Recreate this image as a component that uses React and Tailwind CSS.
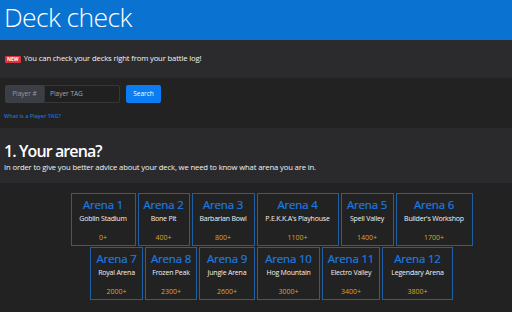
const ARENAS = [
  { n: 1, name: 'Goblin Stadium', trophies: '0+', w: 'w-[65px]' },
  { n: 2, name: 'Bone Pit', trophies: '400+', w: 'w-[52px]' },
  { n: 3, name: 'Barbarian Bowl', trophies: '800+', w: 'w-[63px]' },
  { n: 4, name: "P.E.K.K.A's Playhouse", trophies: '1100+', w: 'w-[82px]' },
  { n: 5, name: 'Spell Valley', trophies: '1400+', w: 'w-[53px]' },
  { n: 6, name: "Builder's Workshop", trophies: '1700+', w: 'w-[77px]' },
  { n: 7, name: 'Royal Arena', trophies: '2000+', w: 'w-[53px]' },
  { n: 8, name: 'Frozen Peak', trophies: '2300+', w: 'w-[52px]' },
  { n: 9, name: 'Jungle Arena', trophies: '2600+', w: 'w-[56px]' },
  { n: 10, name: 'Hog Mountain', trophies: '3000+', w: 'w-[63px]' },
  { n: 11, name: 'Electro Valley', trophies: '3400+', w: 'w-[58px]' },
  { n: 12, name: 'Legendary Arena', trophies: '3800+', w: 'w-[71px]' },
];

const ROWS = [ARENAS.slice(0, 6), ARENAS.slice(6)];

function ArenaCard({ a }) {
  return (
    <div className={`${a.w} h-[53px] border border-[#1f5fa6] flex flex-col items-center shrink-0`}>
      <div className="mt-[4px] text-[11.5px] leading-[14px] tracking-[-0.2px] text-[#1a7ce2] whitespace-nowrap [-webkit-text-stroke:0.2px_#1a7ce2]">Arena {a.n}</div>
      <div className="mt-[2px] text-[7px] leading-[10px] tracking-[-0.2px] text-[#f2f2f2] whitespace-nowrap">{a.name}</div>
      <div className="mt-auto mb-[2px] text-[7px] leading-[10px] text-[#d6a82c]">{a.trophies}</div>
    </div>
  );
}

export default function App() {
  return (
    <div className="w-[512px] h-[312px] overflow-hidden bg-[#222222] text-white" style={{ fontFamily: '"Open Sans", "Noto Sans", sans-serif' }}>
      <div className="h-[40px] bg-[#0a73d2] px-[4px] flex items-center">
        <h1 className="text-[26.5px] font-light leading-none tracking-[-0.6px] -mt-[6px]">Deck check</h1>
      </div>

      <div className="h-[38px] bg-[#2b2b2e] px-[5px] flex items-center gap-[3px]">
        <span className="bg-[#d9333f] text-white text-[5px] font-bold leading-[7px] px-[2px] rounded-[1px]">NEW</span>
        <span className="text-[7.7px] leading-none text-[#f4f4f4] tracking-[-0.15px]">You can check your decks right from your battle log!</span>
      </div>

      <div className="h-[50px] px-[5px] pt-[7px]">
        <div className="flex items-center">
          <div className="h-[18px] w-[39px] bg-[#3b3e44] text-[#9a9ca0] text-[6.5px] flex items-center justify-center rounded-l-[2px]">Player #</div>
          <div className="h-[18px] w-[76px] bg-[#202020] border border-[#35363a] text-[#a8a8a8] text-[6.5px] flex items-center pl-[5px] rounded-r-[2px]">Player TAG</div>
          <button className="ml-[6px] h-[18px] w-[35px] bg-[#0b7cf2] text-white text-[6.5px] rounded-[2px]">Search</button>
        </div>
        <div className="mt-[9px] -ml-[1px] text-[5.5px] font-semibold text-[#1f6fd6]">What is a Player TAG?</div>
      </div>

      <div className="h-[55px] bg-[#2a2a2d] px-[4px] pt-[13px]">
        <h2 className="text-[16px] font-semibold leading-[21px] tracking-[-0.9px]">1. Your arena?</h2>
        <p className="text-[7.7px] leading-[10px] text-[#f2f2f2] tracking-[-0.15px]">In order to give you better advice about your deck, we need to know what arena you are in.</p>
      </div>

      <div className="pt-[10px] pl-[31px] flex flex-col gap-[1px]">
        {ROWS.map((row, i) => (
          <div key={i} className="flex justify-center gap-[2px]">
            {row.map(a => <ArenaCard key={a.n} a={a} />)}
          </div>
        ))}
      </div>
    </div>
  );
}
